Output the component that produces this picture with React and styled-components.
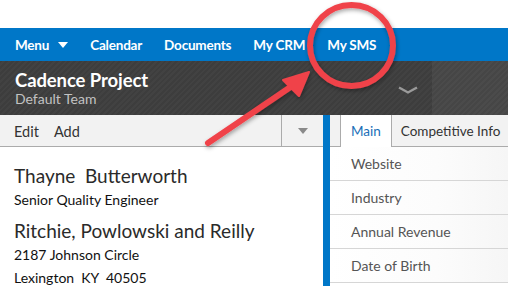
import React from "react";
import styled, { createGlobalStyle } from "styled-components";

const Global = createGlobalStyle`
  html, body { margin: 0; padding: 0; background: #fff; }
  body { font-family: Lato, "Open Sans", sans-serif; }
  #root { width: 508px; height: 286px; overflow: hidden; }
`;

const Page = styled.div`
  position: relative;
  width: 508px;
  height: 286px;
  overflow: hidden;
  display: flex;
  flex-direction: column;
  background: #fff;
`;

const TopSpace = styled.div`
  height: 28px;
  flex: none;
`;

const NavBar = styled.nav`
  height: 33px;
  flex: none;
  background: #0077c8;
  display: flex;
  align-items: center;
  padding-left: 4px;
`;

const NavItem = styled.div`
  color: #fff;
  font-weight: 700;
  font-size: 13.5px;
  padding: 0 11px;
  display: flex;
  align-items: center;
  gap: 9px;
  letter-spacing: -0.2px;
`;

const Header = styled.header`
  height: 54px;
  flex: none;
  display: flex;
`;

const stripes = (a, b) => `repeating-linear-gradient(135deg, ${a} 0px, ${a} 2px, ${b} 2px, ${b} 4px)`;

const HeaderMain = styled.div`
  width: 432px;
  flex: none;
  background: ${stripes("#3d3d3d", "#424242")};
  display: flex;
  align-items: center;
  justify-content: space-between;
  padding: 0 14px 0 15px;
  box-sizing: border-box;
`;

const HeaderSide = styled.div`
  flex: 1;
  background: ${stripes("#464646", "#4b4b4b")};
`;

const TitleBlock = styled.div`
  display: flex;
  flex-direction: column;
  margin-top: -1px;
`;

const Title = styled.div`
  color: #fff;
  font-size: 18.5px;
  font-weight: 700;
  line-height: 22px;
  letter-spacing: -0.1px;
`;

const Subtitle = styled.div`
  color: #c2c2c2;
  font-size: 14px;
  font-weight: 400;
  line-height: 15px;
`;

const Body = styled.div`
  flex: 1;
  display: flex;
  min-height: 0;
`;

const LeftPane = styled.div`
  width: 323px;
  flex: none;
  display: flex;
  flex-direction: column;
  overflow: hidden;
`;

const Toolbar = styled.div`
  height: 31px;
  flex: none;
  background: #f2f2f2;
  border-bottom: 1px solid #ababab;
  display: flex;
  align-items: stretch;
`;

const ToolActions = styled.div`
  flex: 1;
  display: flex;
  align-items: center;
  padding-left: 14px;
  padding-top: 1px;
  gap: 15px;
  color: #333;
  font-size: 14.5px;
`;

const ToolMore = styled.div`
  width: 41px;
  border-left: 1px solid #ababab;
  display: flex;
  align-items: center;
  justify-content: center;
`;

const Details = styled.div`
  flex: none;
  padding: 17px 14px 0;
  color: #222;
  display: flex;
  flex-direction: column;
`;

const BigLine = styled.div`
  font-size: 19px;
  line-height: 24px;
  color: #2a2a2a;
  white-space: pre;
  margin-top: ${p => p.$gap || 0}px;
`;

const SmallLine = styled.div`
  font-size: 14px;
  line-height: 23px;
  color: #111;
  white-space: pre;
`;

const Divider = styled.div`
  width: 7px;
  background: #0077c8;
  flex: none;
`;

const RightPane = styled.div`
  flex: 1;
  min-width: 0;
  overflow: hidden;
  display: flex;
  flex-direction: column;
`;

const Tabs = styled.div`
  height: 31px;
  flex: none;
  background: #f2f2f2;
  border-bottom: 1px solid #ababab;
  display: flex;
  padding-left: 10px;
`;

const Tab = styled.div`
  display: flex;
  align-items: center;
  padding: 0 ${p => (p.$active ? 10 : 9)}px;
  font-size: 13.5px;
  background: ${p => (p.$active ? "#fff" : "#f2f2f2")};
  color: ${p => (p.$active ? "#1a6fb8" : "#333")};
  border-left: 1px solid #ababab;
  white-space: nowrap;
  margin-bottom: ${p => (p.$active ? -1 : 0)}px;
`;

const FieldRow = styled.div`
  height: 33px;
  flex: none;
  border-bottom: 1px solid #d6d6d6;
  display: flex;
  align-items: center;
  padding-left: 21px;
  font-size: 14px;
  color: #555;
  background: linear-gradient(90deg, #fff 0%, #fcfcfc 60%, #f6f6f6 100%);
`;

const Overlay = styled.svg`
  position: absolute;
  left: 0;
  top: 0;
  pointer-events: none;
`;

export default function App() {
  return (
    <Page>
      <Global />
      <TopSpace />
      <NavBar>
        <NavItem>
          Menu
          <svg width="10" height="6" viewBox="0 0 10 6"><path d="M0 0 H10 L5 6 Z" fill="#fff" /></svg>
        </NavItem>
        <NavItem>Calendar</NavItem>
        <NavItem>Documents</NavItem>
        <NavItem>My CRM</NavItem>
        <NavItem>My SMS</NavItem>
      </NavBar>
      <Header>
        <HeaderMain>
          <TitleBlock>
            <Title>Cadence Project</Title>
            <Subtitle>Default Team</Subtitle>
          </TitleBlock>
          <svg width="20" height="8" viewBox="0 0 20 8" style={{ marginTop: 4 }}>
            <path d="M1 1.5 L10 6.5 L19 1.5" stroke="#9a9a9a" strokeWidth="2.4" fill="none" />
          </svg>
        </HeaderMain>
        <HeaderSide />
      </Header>
      <Body>
        <LeftPane>
          <Toolbar>
            <ToolActions>
              <span>Edit</span>
              <span>Add</span>
            </ToolActions>
            <ToolMore>
              <svg width="10" height="6" viewBox="0 0 10 6"><path d="M0 0 H10 L5 6 Z" fill="#8a8a8a" /></svg>
            </ToolMore>
          </Toolbar>
          <Details>
            <BigLine>Thayne  Butterworth</BigLine>
            <SmallLine>Senior Quality Engineer</SmallLine>
            <BigLine $gap={8}>Ritchie, Powlowski and Reilly</BigLine>
            <SmallLine>2187 Johnson Circle</SmallLine>
            <SmallLine>Lexington  KY  40505</SmallLine>
          </Details>
        </LeftPane>
        <Divider />
        <RightPane>
          <Tabs>
            <Tab $active>Main</Tab>
            <Tab>Competitive Info</Tab>
          </Tabs>
          <FieldRow>Website</FieldRow>
          <FieldRow>Industry</FieldRow>
          <FieldRow>Annual Revenue</FieldRow>
          <FieldRow>Date of Birth</FieldRow>
        </RightPane>
      </Body>
      <Overlay width="508" height="286" viewBox="0 0 508 286">
        <defs>
          <filter id="sh" x="-20%" y="-20%" width="140%" height="140%">
            <feDropShadow dx="1" dy="2" stdDeviation="2" floodColor="#000" floodOpacity="0.35" />
          </filter>
        </defs>
        <g filter="url(#sh)">
          <ellipse cx="351.5" cy="45.5" rx="41.5" ry="40.5" stroke="#f0434a" strokeWidth="6" fill="none" />
          <path d="M208 143 L292 86" stroke="#f0434a" strokeWidth="6" strokeLinecap="round" fill="none" />
          <path d="M309 72 L283 80 L299 96 Z" fill="#f0434a" stroke="#f0434a" strokeWidth="2" strokeLinejoin="round" />
        </g>
      </Overlay>
    </Page>
  );
}
